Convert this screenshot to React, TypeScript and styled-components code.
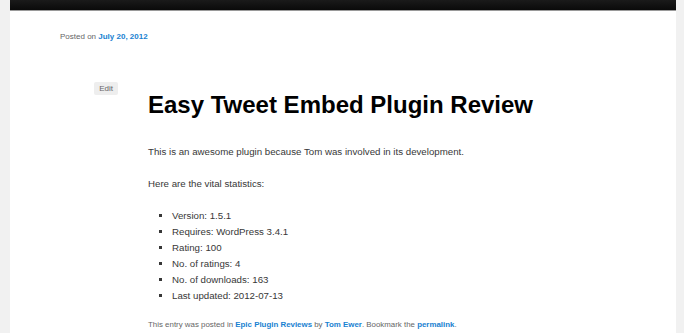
import React from "react"
import styled, { createGlobalStyle } from "styled-components"

const GlobalStyle = createGlobalStyle`
  html, body {
    margin: 0;
    padding: 0;
    background: #f1f1f1;
  }
  body {
    font-family: "Liberation Sans", Arial, sans-serif;
    color: #373737;
  }
`

const Page = styled.div`
  margin: 0 8px 0 10px;
  background: #ffffff;
  min-height: 333px;
`

const TopBar = styled.div`
  height: 10px;
  background: linear-gradient(#1a1a1a, #0a0a0a);
  border-bottom: 1px solid #9a9a9a;
`

const Meta = styled.div`
  padding: 20px 0 0 50px;
  font-size: 8px;
  line-height: 12px;
  color: #666666;
`

const Link = styled.a`
  color: #1982d1;
  font-weight: bold;
  text-decoration: none;
`

const Article = styled.div`
  display: flex;
  align-items: flex-start;
  padding-top: 39px;
`

const EditCol = styled.div`
  width: 138px;
  display: flex;
  justify-content: flex-end;
`

const EditButton = styled.span`
  display: inline-block;
  margin-right: 30px;
  height: 13px;
  line-height: 13px;
  padding: 0 5px;
  font-size: 8px;
  color: #666666;
  background: #eeeeee;
  border-radius: 2px;
`

const Body = styled.div`
  flex: 1;
  padding-top: 7px;
`

const Title = styled.h1`
  margin: 0;
  font-size: 24px;
  line-height: 32px;
  font-weight: bold;
  color: #000000;
`

const Content = styled.div`
  padding-top: 23px;
  font-size: 9.7px;
  line-height: 16px;
`

const Para = styled.p`
  margin: 0 0 16px;
`

const List = styled.ul`
  margin: 0 0 15px;
  padding: 0 0 0 24px;
  list-style: square;
`

const Footer = styled.div`
  font-size: 7.9px;
  line-height: 12px;
  color: #666666;
`

const stats = [
  "Version: 1.5.1",
  "Requires: WordPress 3.4.1",
  "Rating: 100",
  "No. of ratings: 4",
  "No. of downloads: 163",
  "Last updated: 2012-07-13",
]

export default function App() {
  return (
    <>
      <GlobalStyle />
      <Page>
        <TopBar />
        <Meta>
          Posted on <Link href="#">July 20, 2012</Link>
        </Meta>
        <Article>
          <EditCol>
            <EditButton>Edit</EditButton>
          </EditCol>
          <Body>
            <Title>Easy Tweet Embed Plugin Review</Title>
            <Content>
              <Para>This is an awesome plugin because Tom was involved in its development.</Para>
              <Para>Here are the vital statistics:</Para>
              <List>
                {stats.map((s) => (
                  <li key={s}>{s}</li>
                ))}
              </List>
            </Content>
            <Footer>
              This entry was posted in <Link href="#">Epic Plugin Reviews</Link> by{" "}
              <Link href="#">Tom Ewer</Link>. Bookmark the <Link href="#">permalink</Link>.
            </Footer>
          </Body>
        </Article>
      </Page>
    </>
  )
}
